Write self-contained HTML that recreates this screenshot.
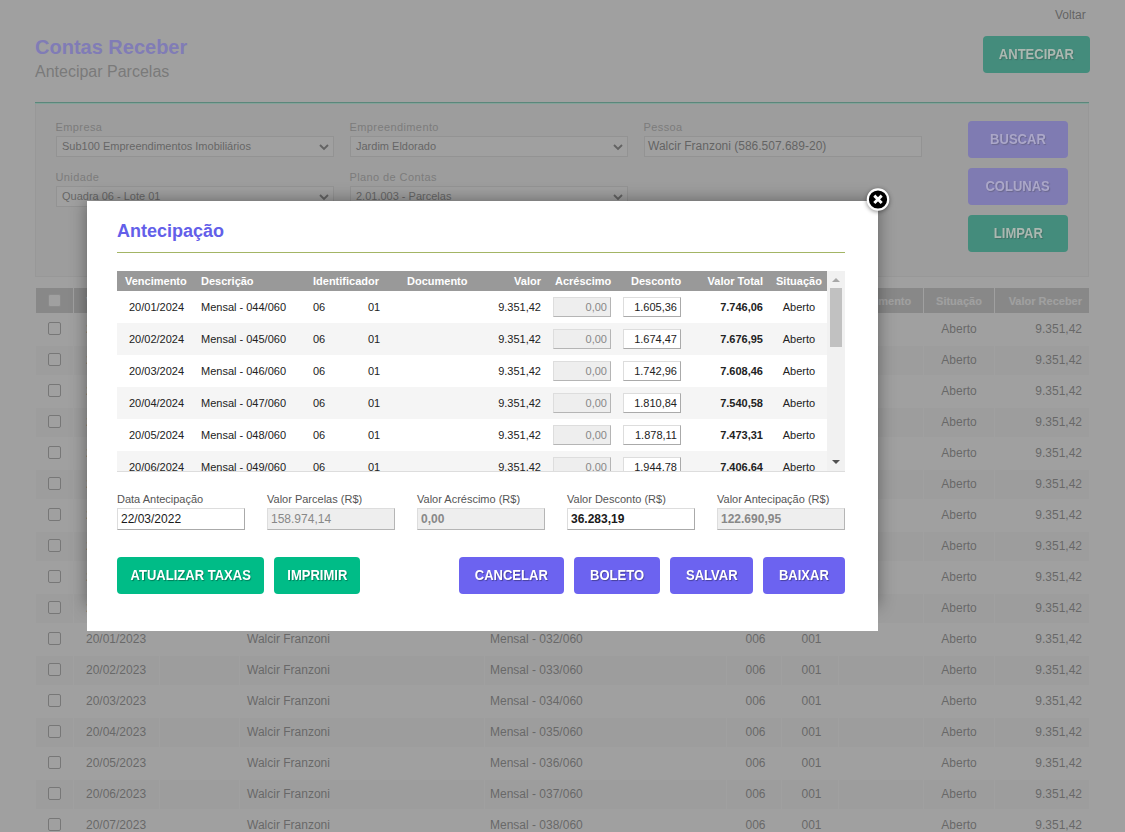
<!DOCTYPE html>
<html lang="pt-BR">
<head>
<meta charset="utf-8">
<title>Contas Receber - Antecipar Parcelas</title>
<style>
*{box-sizing:border-box;margin:0;padding:0}
html,body{width:1125px;height:832px;overflow:hidden;background:#fff}
body{font-family:"Liberation Sans",Arial,sans-serif;font-size:12px;color:#333;position:relative}
.abs{position:absolute}
#voltar{left:1055px;top:8px;font-size:12px;line-height:14px;color:#333}
#h1{left:35px;top:35px;font-size:20px;line-height:24px;font-weight:bold;color:#807cb6;white-space:nowrap}
#h2{left:35px;top:63px;font-size:16px;line-height:18px;color:#808080;white-space:nowrap}
.btn{position:absolute;height:37px;border-radius:4px;color:#fff;font-weight:bold;font-size:14px;line-height:37px;text-align:center;text-shadow:1px 1px 1px rgba(0,0,0,.35);white-space:nowrap}
.bt{display:inline-block;transform:scaleX(.93)}
.g{background:#00bc87}
.p{background:#6c63f0}
.dg{background:#448c7c;color:#acb8b1;text-shadow:1px 1px 1px rgba(60,60,60,.35)}
.dp{background:#7f7bb2;color:#aba7c8;text-shadow:1px 1px 1px rgba(60,60,60,.3)}
#panel{left:35px;top:102px;width:1054px;height:175px;background:#f4f4f4;border:1px solid #e4e4e4;border-top:2px solid #1abc9c}
.lbl{position:absolute;font-size:11px;line-height:13px;color:#858585;letter-spacing:.4px;white-space:nowrap;margin:-1px 0 0 -.5px}
.sel{position:absolute;height:21px;width:278px;border:1px solid #d2d2d2;background:#fff;font-size:11px;line-height:19px;padding-left:5px;color:#3a3a3a;white-space:nowrap;overflow:hidden}
.sel svg{position:absolute;right:4px;top:7px}
.inp{position:absolute;height:21px;width:278px;border:1px solid #d2d2d2;background:#fff;font-size:12px;line-height:19px;padding-left:3px;color:#333;white-space:nowrap}
/* bg table */
#bgt{left:36px;top:288px;width:1053px}
.hr{height:25px;position:relative;margin-bottom:2px}
.hr .c{background:#b0b0b0;color:#fff;font-weight:bold;font-size:11px;line-height:27px;height:25px}
.r{height:29px;position:relative;margin-bottom:2px}
.c{position:absolute;top:0;height:29px;line-height:29px;font-size:12px;color:#444;white-space:nowrap;overflow:hidden}
.r.e .c{background:#f6f6f6}
.c1{left:0;width:37px}
.c2{left:38px;width:85px;padding-left:12px}
.c3{left:124px;width:79px}
.c4{left:204px;width:244px;padding-left:7px}
.c5{left:449px;width:241px;padding-left:5px}
.c6{left:691px;width:54px;text-align:center;padding-left:3px}
.c7{left:746px;width:56px;text-align:center;padding-left:3px}
.c8{left:803px;width:84px}
.c9{left:888px;width:70px;text-align:center}
.c10{left:959px;width:94px;text-align:right;padding-right:7px}
.cb{position:absolute;left:12px;top:7px;width:13px;height:13px;border:1px solid #767676;border-radius:2px;background:#fff}
#ov{left:0;top:0;width:1125px;height:832px;background:rgba(119,119,119,.7)}
/* modal */
#modal{left:87px;top:201px;width:791px;height:430px;background:#fff}
#msh{left:87px;top:201px;width:791px;height:405px;box-shadow:0 0 16px 0 rgba(0,0,0,.4)}
#mt{left:30px;top:19px;font-size:18px;line-height:22px;font-weight:bold;color:#635fe9;white-space:nowrap}
#mhr{left:30px;top:51px;width:728px;height:1px;background:#a3b565}
#tw{left:30px;top:70px;width:728px;height:201px;overflow:hidden;border-bottom:1px solid #ddd}
#th{position:absolute;left:0;top:0;width:710px;height:20px;background:#999;color:#fff;font-weight:bold;font-size:11px;line-height:20px}
#th span{position:absolute;top:0;white-space:nowrap}
.mr{position:absolute;left:0;width:710px;height:32px;font-size:11px;line-height:32px;color:#222}
.mr.e{background:#f5f5f5}
.mr span{position:absolute;top:0;white-space:nowrap}
.m1{left:12px}.m2{left:84px}.m3{left:196px}.m4{left:251px}
.m5{right:286px}
.m6{left:436px;top:6px!important;width:58px;height:20px;line-height:18px;border:1px solid;border-color:#ddd #b5b5b5 #b5b5b5 #ddd;background:#eee;color:#888;text-align:right;padding-right:3px}
.m7{left:506px;top:6px!important;width:58px;height:20px;line-height:18px;border:1px solid;border-color:#ddd #aaa #aaa #ddd;background:#fff;text-align:right;padding-right:3px}
.m8{right:64px;font-weight:bold}
.m9{left:652px;width:60px;text-align:center}
#sb{position:absolute;left:710px;top:0;width:18px;height:200px;background:#f1f1f1}
#thumb{position:absolute;left:3px;top:17px;width:12px;height:59px;background:#c1c1c1}
.fl{position:absolute;font-size:11px;line-height:13px;color:#555;white-space:nowrap}
.fi{position:absolute;width:128px;height:22px;border:1px solid;border-color:#ddd #aaa #aaa #ddd;background:#fff;font-size:12px;line-height:20px;padding-left:3px;color:#1a1a1a;white-space:nowrap}
.fi.d{background:#eee;border-color:#ddd #b5b5b5 #b5b5b5 #ddd;color:#888}
.fi.b{font-weight:bold}
#close{left:866px;top:187px;width:24px;height:24px;overflow:visible;filter:drop-shadow(0 1px 2px rgba(0,0,0,.45))}
</style>
</head>
<body>
<div class="abs" id="voltar">Voltar</div>
<div class="abs" id="h2">Antecipar Parcelas</div>

<div class="abs" id="panel">
  <div class="lbl" style="left:20px;top:18px">Empresa</div>
  <div class="sel" style="left:20px;top:32px">Sub100 Empreendimentos Imobiliários<svg width="10" height="7" viewBox="0 0 10 7"><path d="M1 1l4 4l4-4" fill="none" stroke="#333" stroke-width="1.9"/></svg></div>
  <div class="lbl" style="left:314px;top:18px">Empreendimento</div>
  <div class="sel" style="left:314px;top:32px">Jardim Eldorado<svg width="10" height="7" viewBox="0 0 10 7"><path d="M1 1l4 4l4-4" fill="none" stroke="#333" stroke-width="1.9"/></svg></div>
  <div class="lbl" style="left:608px;top:18px">Pessoa</div>
  <div class="inp" style="left:608px;top:32px">Walcir Franzoni (586.507.689-20)</div>
  <div class="lbl" style="left:20px;top:68px">Unidade</div>
  <div class="sel" style="left:20px;top:82px">Quadra 06 - Lote 01<svg width="10" height="7" viewBox="0 0 10 7"><path d="M1 1l4 4l4-4" fill="none" stroke="#333" stroke-width="1.9"/></svg></div>
  <div class="lbl" style="left:314px;top:68px">Plano de Contas</div>
  <div class="sel" style="left:314px;top:82px">2.01.003 - Parcelas<svg width="10" height="7" viewBox="0 0 10 7"><path d="M1 1l4 4l4-4" fill="none" stroke="#333" stroke-width="1.9"/></svg></div>
</div>

<div class="abs" id="bgt">
<div class="hr"><span class="c c1"><i class="cb" style="top:6px;border-color:#bbb"></i></span><span class="c c2">Vencimento</span><span class="c c3">Pagamento</span><span class="c c4">Pessoa</span><span class="c c5">Descrição</span><span class="c c6">Quadra</span><span class="c c7">Lote</span><span class="c c8" style="text-align:center">Documento</span><span class="c c9">Situação</span><span class="c c10">Valor Receber</span></div>
<div class="r"><span class="c c1"><i class="cb"></i></span><span class="c c2">20/03/2022</span><span class="c c3"></span><span class="c c4">Walcir Franzoni</span><span class="c c5">Mensal - 022/060</span><span class="c c6">006</span><span class="c c7">001</span><span class="c c8"></span><span class="c c9">Aberto</span><span class="c c10">9.351,42</span></div>
<div class="r e"><span class="c c1"><i class="cb"></i></span><span class="c c2">20/04/2022</span><span class="c c3"></span><span class="c c4">Walcir Franzoni</span><span class="c c5">Mensal - 023/060</span><span class="c c6">006</span><span class="c c7">001</span><span class="c c8"></span><span class="c c9">Aberto</span><span class="c c10">9.351,42</span></div>
<div class="r"><span class="c c1"><i class="cb"></i></span><span class="c c2">20/05/2022</span><span class="c c3"></span><span class="c c4">Walcir Franzoni</span><span class="c c5">Mensal - 024/060</span><span class="c c6">006</span><span class="c c7">001</span><span class="c c8"></span><span class="c c9">Aberto</span><span class="c c10">9.351,42</span></div>
<div class="r e"><span class="c c1"><i class="cb"></i></span><span class="c c2">20/06/2022</span><span class="c c3"></span><span class="c c4">Walcir Franzoni</span><span class="c c5">Mensal - 025/060</span><span class="c c6">006</span><span class="c c7">001</span><span class="c c8"></span><span class="c c9">Aberto</span><span class="c c10">9.351,42</span></div>
<div class="r"><span class="c c1"><i class="cb"></i></span><span class="c c2">20/07/2022</span><span class="c c3"></span><span class="c c4">Walcir Franzoni</span><span class="c c5">Mensal - 026/060</span><span class="c c6">006</span><span class="c c7">001</span><span class="c c8"></span><span class="c c9">Aberto</span><span class="c c10">9.351,42</span></div>
<div class="r e"><span class="c c1"><i class="cb"></i></span><span class="c c2">20/08/2022</span><span class="c c3"></span><span class="c c4">Walcir Franzoni</span><span class="c c5">Mensal - 027/060</span><span class="c c6">006</span><span class="c c7">001</span><span class="c c8"></span><span class="c c9">Aberto</span><span class="c c10">9.351,42</span></div>
<div class="r"><span class="c c1"><i class="cb"></i></span><span class="c c2">20/09/2022</span><span class="c c3"></span><span class="c c4">Walcir Franzoni</span><span class="c c5">Mensal - 028/060</span><span class="c c6">006</span><span class="c c7">001</span><span class="c c8"></span><span class="c c9">Aberto</span><span class="c c10">9.351,42</span></div>
<div class="r e"><span class="c c1"><i class="cb"></i></span><span class="c c2">20/10/2022</span><span class="c c3"></span><span class="c c4">Walcir Franzoni</span><span class="c c5">Mensal - 029/060</span><span class="c c6">006</span><span class="c c7">001</span><span class="c c8"></span><span class="c c9">Aberto</span><span class="c c10">9.351,42</span></div>
<div class="r"><span class="c c1"><i class="cb"></i></span><span class="c c2">20/11/2022</span><span class="c c3"></span><span class="c c4">Walcir Franzoni</span><span class="c c5">Mensal - 030/060</span><span class="c c6">006</span><span class="c c7">001</span><span class="c c8"></span><span class="c c9">Aberto</span><span class="c c10">9.351,42</span></div>
<div class="r e"><span class="c c1"><i class="cb"></i></span><span class="c c2">20/12/2022</span><span class="c c3"></span><span class="c c4">Walcir Franzoni</span><span class="c c5">Mensal - 031/060</span><span class="c c6">006</span><span class="c c7">001</span><span class="c c8"></span><span class="c c9">Aberto</span><span class="c c10">9.351,42</span></div>
<div class="r"><span class="c c1"><i class="cb"></i></span><span class="c c2">20/01/2023</span><span class="c c3"></span><span class="c c4">Walcir Franzoni</span><span class="c c5">Mensal - 032/060</span><span class="c c6">006</span><span class="c c7">001</span><span class="c c8"></span><span class="c c9">Aberto</span><span class="c c10">9.351,42</span></div>
<div class="r e"><span class="c c1"><i class="cb"></i></span><span class="c c2">20/02/2023</span><span class="c c3"></span><span class="c c4">Walcir Franzoni</span><span class="c c5">Mensal - 033/060</span><span class="c c6">006</span><span class="c c7">001</span><span class="c c8"></span><span class="c c9">Aberto</span><span class="c c10">9.351,42</span></div>
<div class="r"><span class="c c1"><i class="cb"></i></span><span class="c c2">20/03/2023</span><span class="c c3"></span><span class="c c4">Walcir Franzoni</span><span class="c c5">Mensal - 034/060</span><span class="c c6">006</span><span class="c c7">001</span><span class="c c8"></span><span class="c c9">Aberto</span><span class="c c10">9.351,42</span></div>
<div class="r e"><span class="c c1"><i class="cb"></i></span><span class="c c2">20/04/2023</span><span class="c c3"></span><span class="c c4">Walcir Franzoni</span><span class="c c5">Mensal - 035/060</span><span class="c c6">006</span><span class="c c7">001</span><span class="c c8"></span><span class="c c9">Aberto</span><span class="c c10">9.351,42</span></div>
<div class="r"><span class="c c1"><i class="cb"></i></span><span class="c c2">20/05/2023</span><span class="c c3"></span><span class="c c4">Walcir Franzoni</span><span class="c c5">Mensal - 036/060</span><span class="c c6">006</span><span class="c c7">001</span><span class="c c8"></span><span class="c c9">Aberto</span><span class="c c10">9.351,42</span></div>
<div class="r e"><span class="c c1"><i class="cb"></i></span><span class="c c2">20/06/2023</span><span class="c c3"></span><span class="c c4">Walcir Franzoni</span><span class="c c5">Mensal - 037/060</span><span class="c c6">006</span><span class="c c7">001</span><span class="c c8"></span><span class="c c9">Aberto</span><span class="c c10">9.351,42</span></div>
<div class="r"><span class="c c1"><i class="cb"></i></span><span class="c c2">20/07/2023</span><span class="c c3"></span><span class="c c4">Walcir Franzoni</span><span class="c c5">Mensal - 038/060</span><span class="c c6">006</span><span class="c c7">001</span><span class="c c8"></span><span class="c c9">Aberto</span><span class="c c10">9.351,42</span></div>
</div>

<div class="abs" id="ov"></div>
<div class="btn dg" style="left:983px;top:36px;width:107px"><span class="bt">ANTECIPAR</span></div>
<div class="btn dp" style="left:968px;top:121px;width:100px"><span class="bt">BUSCAR</span></div>
<div class="btn dp" style="left:968px;top:168px;width:100px"><span class="bt">COLUNAS</span></div>
<div class="btn dg" style="left:968px;top:215px;width:100px"><span class="bt">LIMPAR</span></div>
<div class="abs" id="h1">Contas Receber</div>
<div class="abs" style="left:35px;top:102px;width:1054px;height:1px;background:#5b877b"></div>
<div class="abs" style="left:35px;top:103px;width:1054px;height:1px;background:#83a198"></div>

<div class="abs" id="msh"></div>
<div class="abs" id="modal">
  <div class="abs" id="mt">Antecipação</div>
  <div class="abs" id="mhr"></div>
  <div class="abs" id="tw">
    <div id="th"><span style="left:8px">Vencimento</span><span style="left:84px">Descrição</span><span style="left:196px">Identificador</span><span style="left:290px">Documento</span><span style="right:286px">Valor</span><span style="left:438px">Acréscimo</span><span style="left:514px">Desconto</span><span style="right:64px">Valor Total</span><span style="left:659px">Situação</span></div>
    <div style="position:absolute;left:0;top:20px;width:710px;height:181px;overflow:hidden">
<div class="mr" style="top:0px"><span class="m1">20/01/2024</span><span class="m2">Mensal - 044/060</span><span class="m3">06</span><span class="m4">01</span><span class="m5">9.351,42</span><span class="m6 dis">0,00</span><span class="m7">1.605,36</span><span class="m8">7.746,06</span><span class="m9">Aberto</span></div>
<div class="mr e" style="top:32px"><span class="m1">20/02/2024</span><span class="m2">Mensal - 045/060</span><span class="m3">06</span><span class="m4">01</span><span class="m5">9.351,42</span><span class="m6 dis">0,00</span><span class="m7">1.674,47</span><span class="m8">7.676,95</span><span class="m9">Aberto</span></div>
<div class="mr" style="top:64px"><span class="m1">20/03/2024</span><span class="m2">Mensal - 046/060</span><span class="m3">06</span><span class="m4">01</span><span class="m5">9.351,42</span><span class="m6 dis">0,00</span><span class="m7">1.742,96</span><span class="m8">7.608,46</span><span class="m9">Aberto</span></div>
<div class="mr e" style="top:96px"><span class="m1">20/04/2024</span><span class="m2">Mensal - 047/060</span><span class="m3">06</span><span class="m4">01</span><span class="m5">9.351,42</span><span class="m6 dis">0,00</span><span class="m7">1.810,84</span><span class="m8">7.540,58</span><span class="m9">Aberto</span></div>
<div class="mr" style="top:128px"><span class="m1">20/05/2024</span><span class="m2">Mensal - 048/060</span><span class="m3">06</span><span class="m4">01</span><span class="m5">9.351,42</span><span class="m6 dis">0,00</span><span class="m7">1.878,11</span><span class="m8">7.473,31</span><span class="m9">Aberto</span></div>
<div class="mr e" style="top:160px"><span class="m1">20/06/2024</span><span class="m2">Mensal - 049/060</span><span class="m3">06</span><span class="m4">01</span><span class="m5">9.351,42</span><span class="m6 dis">0,00</span><span class="m7">1.944,78</span><span class="m8">7.406,64</span><span class="m9">Aberto</span></div>
<div class="mr" style="top:192px"><span class="m1">20/07/2024</span><span class="m2">Mensal - 050/060</span><span class="m3">06</span><span class="m4">01</span><span class="m5">9.351,42</span><span class="m6 dis">0,00</span><span class="m7">2.010,85</span><span class="m8">7.340,57</span><span class="m9">Aberto</span></div>
    </div>
    <div id="sb"><div id="thumb"></div>
      <svg class="abs" style="left:5px;top:7px" width="8" height="4" viewBox="0 0 8 4"><path d="M0 4L4 0L8 4z" fill="#a8a8a8"/></svg>
      <svg class="abs" style="left:5px;top:189px" width="8" height="4" viewBox="0 0 8 4"><path d="M0 0L4 4L8 0z" fill="#505050"/></svg>
    </div>
  </div>
  <div class="fl" style="left:30px;top:292px">Data Antecipação</div>
  <div class="fi" style="left:30px;top:307px">22/03/2022</div>
  <div class="fl" style="left:180px;top:292px">Valor Parcelas (R$)</div>
  <div class="fi d" style="left:180px;top:307px">158.974,14</div>
  <div class="fl" style="left:330px;top:292px">Valor Acréscimo (R$)</div>
  <div class="fi d b" style="left:330px;top:307px">0,00</div>
  <div class="fl" style="left:480px;top:292px">Valor Desconto (R$)</div>
  <div class="fi b" style="left:480px;top:307px">36.283,19</div>
  <div class="fl" style="left:630px;top:292px">Valor Antecipação (R$)</div>
  <div class="fi d b" style="left:630px;top:307px">122.690,95</div>

  <div class="btn g" style="left:30px;top:356px;width:147px"><span class="bt">ATUALIZAR TAXAS</span></div>
  <div class="btn g" style="left:187px;top:356px;width:86px"><span class="bt">IMPRIMIR</span></div>
  <div class="btn p" style="left:372px;top:356px;width:105px"><span class="bt">CANCELAR</span></div>
  <div class="btn p" style="left:487px;top:356px;width:86px"><span class="bt">BOLETO</span></div>
  <div class="btn p" style="left:583px;top:356px;width:83px"><span class="bt">SALVAR</span></div>
  <div class="btn p" style="left:676px;top:356px;width:82px"><span class="bt">BAIXAR</span></div>
</div>

<svg class="abs" id="close" viewBox="0 0 24 24"><circle cx="12" cy="12.5" r="10.2" fill="#000" stroke="#fff" stroke-width="2.2"/><path d="M8.3 8.6l7.4 7.4M15.7 8.6l-7.4 7.4" stroke="#fff" stroke-width="2.9" fill="none"/></svg>
</body>
</html>
